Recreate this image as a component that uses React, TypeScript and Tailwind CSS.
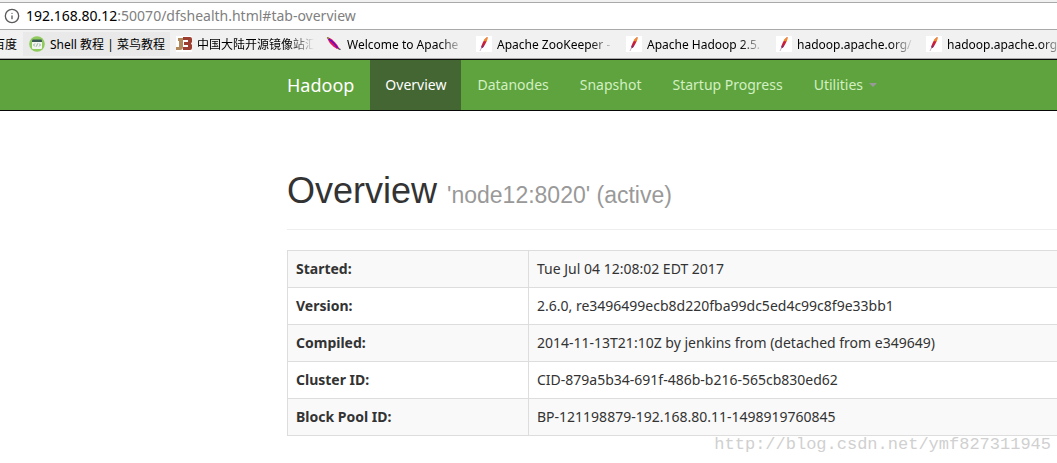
import React from "react";
import { Info } from "lucide-react";

type Bookmark = {
  title: string;
  icon: React.ReactNode;
  active?: boolean;
  faded?: boolean;
};

const ShellIcon = () => (
  <svg viewBox="0 0 16 16" className="size-4 shrink-0" aria-hidden="true">
    <circle cx="8" cy="8" r="7.8" fill="#8fca5c" />
    <rect x="3" y="4" width="10" height="9" rx="1" fill="#f2f6ee" />
    <path d="M3 6V4.500a1 1 0 0 1 1-1h8a1 1 0 0 1 1 1V6z" fill="#3b5a55" />
    <path d="M6 7.500 4.500 9 6 10.500M10 7.500 11.500 9 10 10.500M8.500 7.500l-1 3" fill="none" stroke="#6b8580" strokeWidth="0.7" />
  </svg>
);

const MirrorIcon = () => (
  <svg viewBox="0 0 16 16" className="size-4 shrink-0" aria-hidden="true">
    <rect width="16" height="16" fill="#fff" />
    <path d="M2 2h5v9a3 3 0 0 1-3 3H0v-3h3V5H2z" fill="#b08a5c" />
    <path d="M7 1h7a2 2 0 0 1 2 2v3l-1 1.500 1 1.500v3a2 2 0 0 1-2 2H7v-3h5V9H8V6h4V4H7z" fill="#9c3f30" />
  </svg>
);

const OldFeatherIcon = () => (
  <svg viewBox="0 0 16 16" className="size-4 shrink-0" aria-hidden="true">
    <path d="M1 1C5 2 10 6 13 12L11 13C6 10 2.500 6.500 1 1z" fill="#e8125a" />
    <path d="M2.500 3c3 1.500 6.500 5 9 9" fill="none" stroke="#4a10d8" strokeWidth="1.300" />
    <path d="M1 1.500l2 1.300" stroke="#6f9a2a" strokeWidth="1.200" />
    <path d="M12 12.500l2.500 1" stroke="#3a2a3a" strokeWidth="1.200" />
  </svg>
);

const FeatherIcon = () => (
  <svg viewBox="0 0 16 16" className="size-4 shrink-0" aria-hidden="true">
    <rect width="16" height="16" fill="#fff" />
    <path d="M11.500 1C8.500 2.500 6 7 5 12.500L7 11.500C9.500 8 11.500 4.500 11.500 1z" fill="#c8203c" />
    <path d="M11.500 1C10 1.600 8.700 3 7.700 5l2.900.500c.600-1.500.900-3 .900-4.500z" fill="#f08a24" />
    <path d="M5.600 9.500 5 12.500 7 11.500l1.200-2z" fill="#8a2a6a" />
    <path d="M5.500 11.500 4 15" stroke="#c9b4cc" strokeWidth="1" />
  </svg>
);

const bookmarks: Bookmark[] = [
  { title: "Shell 教程 | 菜鸟教程", icon: <ShellIcon />, active: true },
  { title: "中国大陆开源镜像站汇", icon: <MirrorIcon />, faded: true },
  { title: "Welcome to Apache", icon: <OldFeatherIcon />, faded: true },
  { title: "Apache ZooKeeper -", icon: <FeatherIcon />, faded: true },
  { title: "Apache Hadoop 2.5.", icon: <FeatherIcon />, faded: true },
  { title: "hadoop.apache.org/", icon: <FeatherIcon />, faded: true },
  { title: "hadoop.apache.org/", icon: <FeatherIcon />, faded: true },
];

const navItems = ["Overview", "Datanodes", "Snapshot", "Startup Progress"];

const details = [
  { label: "Started:", value: "Tue Jul 04 12:08:02 EDT 2017" },
  { label: "Version:", value: "2.6.0, re3496499ecb8d220fba99dc5ed4c99c8f9e33bb1" },
  { label: "Compiled:", value: "2014-11-13T21:10Z by jenkins from (detached from e349649)" },
  { label: "Cluster ID:", value: "CID-879a5b34-691f-486b-b216-565cb830ed62" },
  { label: "Block Pool ID:", value: "BP-121198879-192.168.80.11-1498919760845" },
];

const BrowserBar = () => (
  <div className="bg-[#f1f1f1] pt-0.5">
    <div className="flex h-7 items-center gap-1.5 border-y border-[#a9a9a9] bg-white px-1">
      <Info className="size-4 shrink-0 text-[#5a5a5a]" aria-hidden="true" />
      <button type="button" className="text-[14px] leading-5 text-[#808080]">
        <span className="text-black">192.168.80.12</span>:50070/dfshealth.html#tab-overview
      </button>
    </div>
    <div className="flex h-[29px] items-center overflow-hidden border-b border-[#a9a9a9] text-[12px] leading-4 text-black">
      <a href="#baidu" className="mr-1.5 flex w-[17px] shrink-0 justify-end overflow-hidden pt-0.5 whitespace-nowrap">
        百度
      </a>
      {bookmarks.map((item, i) => (
        <a
          key={i}
          href="#bookmark"
          className={`flex h-6 shrink-0 items-center gap-[5px] px-1.5 ${
            item.active ? "w-[147px] bg-[#e9e9e9]" : "w-[150px]"
          }`}
        >
          {item.icon}
          <span
            className={`min-w-0 flex-1 pt-0.5 whitespace-nowrap ${
              item.faded ? "mask-r-from-80% mask-r-to-100%" : ""
            }`}
          >
            {item.title}
          </span>
        </a>
      ))}
    </div>
  </div>
);

const Navbar = () => (
  <nav className="flex border-y border-[#080808] bg-[#5fa33e] pl-[271px] text-[14px] leading-5 whitespace-nowrap text-[#d2f0c2]">
    <a href="#hadoop" className="px-4 py-[15px] text-[18px] text-white">
      Hadoop
    </a>
    <div className="flex gap-px">
      {navItems.map((item) => (
        <a
          key={item}
          href={`#${item}`}
          className={`px-[15px] py-[15px] ${item === "Overview" ? "bg-[#446633] text-white" : ""}`}
        >
          {item}
        </a>
      ))}
      <button type="button" className="flex items-center gap-1.5 px-[15px] py-[15px]">
        Utilities
        <span className="border-x-4 border-t-4 border-x-transparent border-t-[#999999]" />
      </button>
    </div>
  </nav>
);

const App: React.FC = () => {
  return (
    <div className="relative overflow-hidden bg-white pb-[27px] font-['Noto_Sans','Noto_Sans_CJK_SC',sans-serif] text-[#333333]">
      <BrowserBar />
      <Navbar />

      <main className="pt-[60px] pl-[287px]">
        <h1 className="mb-5 border-b border-[#eeeeee] pb-[18px] font-['Liberation_Sans',sans-serif] text-[36px] leading-10 whitespace-nowrap">
          Overview <small className="text-[23px] leading-6 text-[#999999]">'node12:8020' (active)</small>
        </h1>

        <table className="w-full border-collapse border-y border-l border-[#dddddd] text-left text-[14px] leading-5">
          <tbody>
            {details.map((row) => (
              <tr key={row.label} className="border-b border-[#dddddd] odd:bg-[#f9f9f9]">
                <th scope="row" className="w-[241px] border-r border-[#dddddd] p-2 font-bold">
                  {row.label}
                </th>
                <td className="p-2 whitespace-nowrap">{row.value}</td>
              </tr>
            ))}
          </tbody>
        </table>
      </main>

      {/* Watermark laid over the foot of the table */}
      <p className="absolute right-1.5 bottom-1.5 font-['Liberation_Mono',monospace] text-[17px] leading-6 text-[#d0d0d0]">
        http://blog.csdn.net/ymf827311945
      </p>
    </div>
  );
};

export default App;
